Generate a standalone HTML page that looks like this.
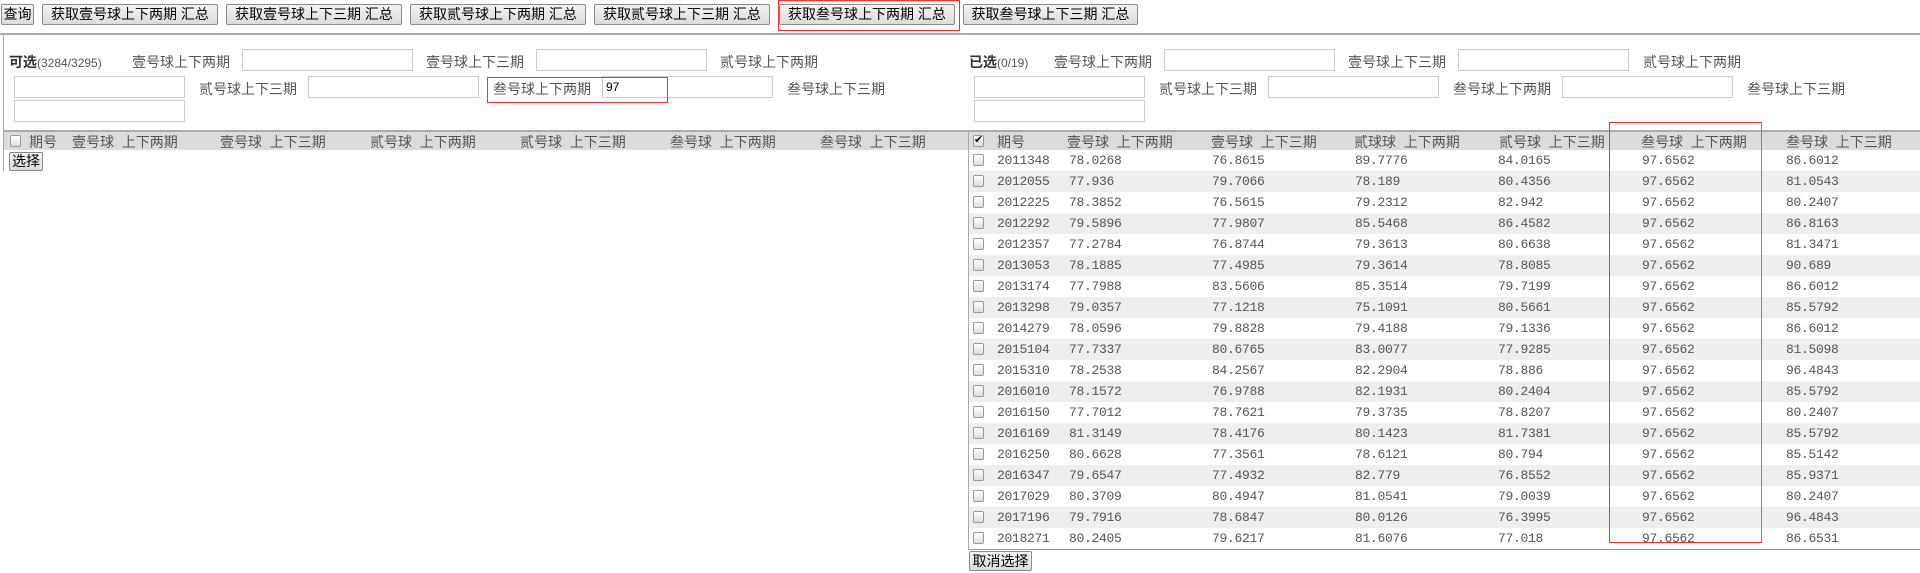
<!DOCTYPE html>
<html><head><meta charset="utf-8"><style>
*{margin:0;padding:0;box-sizing:border-box}
body{width:1920px;height:573px;background:#fff;position:relative;overflow:hidden;font-family:"Liberation Sans","Noto Sans CJK SC",sans-serif;font-size:14px;color:#555}
.a{position:absolute;white-space:nowrap}
.btn{position:absolute;top:4px;height:21px;background:linear-gradient(#f4f4f4,#dcdcdc);border:1px solid #8a8a8a;border-radius:2px;color:#000;font-size:14px;line-height:19px;text-align:center}
.inp{position:absolute;height:22px;width:171px;border:1px solid #ccc;background:#fff;color:#000;font-size:12px;line-height:20px;padding-left:3px}
.red{position:absolute;border:1px solid #e33}
.hdr{position:absolute;top:130px;height:20px;background:#dcdcdc;border-top:2px solid #aaa;font-size:14px;color:#555}
.cb{position:absolute;width:11px;height:12px;border:1px solid #999;border-radius:2px;background:linear-gradient(#fff,#ddd)}
.row{position:absolute;left:969px;width:951px;height:21px;font-family:"Liberation Mono","Noto Sans CJK SC",monospace;font-size:13px;color:#555;line-height:21px;letter-spacing:-0.3px}
.row span{position:absolute}
</style></head><body>
<div class="btn" style="left:1px;width:33px">查询</div>
<div class="btn" style="left:42px;width:176px">获取壹号球上下两期 汇总</div>
<div class="btn" style="left:226px;width:176px">获取壹号球上下三期 汇总</div>
<div class="btn" style="left:410px;width:176px">获取贰号球上下两期 汇总</div>
<div class="btn" style="left:594px;width:176px">获取贰号球上下三期 汇总</div>
<div class="btn" style="left:779px;width:176px">获取叁号球上下两期 汇总</div>
<div class="red" style="left:778px;top:0;width:182px;height:31px"></div>
<div class="btn" style="left:963px;width:175px">获取叁号球上下三期 汇总</div>
<div class="a" style="left:0;top:33px;width:1920px;height:2px;background:#aaa"></div>
<div class="a" style="left:3px;top:33px;width:1px;height:138px;background:#aaa"></div>

<!-- left -->
<div class="a" style="left:9px;top:52px;font-size:14px"><b style="color:#333">可选</b><span style="font-size:12px">(3284/3295)</span></div>
<div class="a" style="left:132px;top:52px">壹号球上下两期</div>
<div class="inp" style="left:242px;top:49px"></div>
<div class="a" style="left:426px;top:52px">壹号球上下三期</div>
<div class="inp" style="left:536px;top:49px"></div>
<div class="a" style="left:720px;top:52px">贰号球上下两期</div>
<div class="inp" style="left:14px;top:76px"></div>
<div class="a" style="left:199px;top:79px">贰号球上下三期</div>
<div class="inp" style="left:308px;top:76px"></div>
<div class="a" style="left:493px;top:79px">叁号球上下两期</div>
<div class="inp" style="left:602px;top:76px">97</div>
<div class="red" style="left:487px;top:77px;width:181px;height:26px"></div>
<div class="a" style="left:787px;top:79px">叁号球上下三期</div>
<div class="inp" style="left:14px;top:100px"></div>
<div class="hdr" style="left:4px;width:964px">
<div class="cb" style="left:6px;top:3px"></div>
<span class="a" style="left:25px;top:0">期号</span>
<span class="a" style="left:68px;top:0">壹号球&nbsp; 上下两期</span>
<span class="a" style="left:216px;top:0">壹号球&nbsp; 上下三期</span>
<span class="a" style="left:366px;top:0">贰号球&nbsp; 上下两期</span>
<span class="a" style="left:516px;top:0">贰号球&nbsp; 上下三期</span>
<span class="a" style="left:666px;top:0">叁号球&nbsp; 上下两期</span>
<span class="a" style="left:816px;top:0">叁号球&nbsp; 上下三期</span>
</div>
<div class="btn" style="left:9px;top:152px;width:34px;height:19px;font-size:14px;line-height:17px">选择</div>

<!-- right -->
<div class="a" style="left:969px;top:52px;font-size:14px"><b style="color:#333">已选</b><span style="font-size:12px">(0/19)</span></div>
<div class="a" style="left:1054px;top:52px">壹号球上下两期</div>
<div class="inp" style="left:1164px;top:49px"></div>
<div class="a" style="left:1348px;top:52px">壹号球上下三期</div>
<div class="inp" style="left:1458px;top:49px"></div>
<div class="a" style="left:1643px;top:52px">贰号球上下两期</div>
<div class="inp" style="left:974px;top:76px"></div>
<div class="a" style="left:1159px;top:79px">贰号球上下三期</div>
<div class="inp" style="left:1268px;top:76px"></div>
<div class="a" style="left:1453px;top:79px">叁号球上下两期</div>
<div class="inp" style="left:1562px;top:76px"></div>
<div class="a" style="left:1747px;top:79px">叁号球上下三期</div>
<div class="inp" style="left:974px;top:100px"></div>
<div class="a" style="left:968px;top:130px;width:1px;height:420px;background:#aaa"></div>
<div class="hdr" style="left:969px;width:951px">
<div class="cb" style="left:4px;top:3px;font-size:11px;line-height:9px;color:#000;text-align:center">✔</div>
<span class="a" style="left:28px;top:0">期号</span>
<span class="a" style="left:98px;top:0">壹号球&nbsp; 上下两期</span>
<span class="a" style="left:242px;top:0">壹号球&nbsp; 上下三期</span>
<span class="a" style="left:385px;top:0">贰球球&nbsp; 上下两期</span>
<span class="a" style="left:530px;top:0">贰号球&nbsp; 上下三期</span>
<span class="a" style="left:672px;top:0">叁号球&nbsp; 上下两期</span>
<span class="a" style="left:817px;top:0">叁号球&nbsp; 上下三期</span>
</div>
<div class="row" style="top:150px;background:#fff"><div class="cb" style="left:4px;top:4px"></div><span style="left:28px">2011348</span><span style="left:100px">78.0268</span><span style="left:243px">76.8615</span><span style="left:386px">89.7776</span><span style="left:529px">84.0165</span><span style="left:673px">97.6562</span><span style="left:817px">86.6012</span></div>
<div class="row" style="top:171px;background:#eee"><div class="cb" style="left:4px;top:4px"></div><span style="left:28px">2012055</span><span style="left:100px">77.936</span><span style="left:243px">79.7066</span><span style="left:386px">78.189</span><span style="left:529px">80.4356</span><span style="left:673px">97.6562</span><span style="left:817px">81.0543</span></div>
<div class="row" style="top:192px;background:#fff"><div class="cb" style="left:4px;top:4px"></div><span style="left:28px">2012225</span><span style="left:100px">78.3852</span><span style="left:243px">76.5615</span><span style="left:386px">79.2312</span><span style="left:529px">82.942</span><span style="left:673px">97.6562</span><span style="left:817px">80.2407</span></div>
<div class="row" style="top:213px;background:#eee"><div class="cb" style="left:4px;top:4px"></div><span style="left:28px">2012292</span><span style="left:100px">79.5896</span><span style="left:243px">77.9807</span><span style="left:386px">85.5468</span><span style="left:529px">86.4582</span><span style="left:673px">97.6562</span><span style="left:817px">86.8163</span></div>
<div class="row" style="top:234px;background:#fff"><div class="cb" style="left:4px;top:4px"></div><span style="left:28px">2012357</span><span style="left:100px">77.2784</span><span style="left:243px">76.8744</span><span style="left:386px">79.3613</span><span style="left:529px">80.6638</span><span style="left:673px">97.6562</span><span style="left:817px">81.3471</span></div>
<div class="row" style="top:255px;background:#eee"><div class="cb" style="left:4px;top:4px"></div><span style="left:28px">2013053</span><span style="left:100px">78.1885</span><span style="left:243px">77.4985</span><span style="left:386px">79.3614</span><span style="left:529px">78.8085</span><span style="left:673px">97.6562</span><span style="left:817px">90.689</span></div>
<div class="row" style="top:276px;background:#fff"><div class="cb" style="left:4px;top:4px"></div><span style="left:28px">2013174</span><span style="left:100px">77.7988</span><span style="left:243px">83.5606</span><span style="left:386px">85.3514</span><span style="left:529px">79.7199</span><span style="left:673px">97.6562</span><span style="left:817px">86.6012</span></div>
<div class="row" style="top:297px;background:#eee"><div class="cb" style="left:4px;top:4px"></div><span style="left:28px">2013298</span><span style="left:100px">79.0357</span><span style="left:243px">77.1218</span><span style="left:386px">75.1091</span><span style="left:529px">80.5661</span><span style="left:673px">97.6562</span><span style="left:817px">85.5792</span></div>
<div class="row" style="top:318px;background:#fff"><div class="cb" style="left:4px;top:4px"></div><span style="left:28px">2014279</span><span style="left:100px">78.0596</span><span style="left:243px">79.8828</span><span style="left:386px">79.4188</span><span style="left:529px">79.1336</span><span style="left:673px">97.6562</span><span style="left:817px">86.6012</span></div>
<div class="row" style="top:339px;background:#eee"><div class="cb" style="left:4px;top:4px"></div><span style="left:28px">2015104</span><span style="left:100px">77.7337</span><span style="left:243px">80.6765</span><span style="left:386px">83.0077</span><span style="left:529px">77.9285</span><span style="left:673px">97.6562</span><span style="left:817px">81.5098</span></div>
<div class="row" style="top:360px;background:#fff"><div class="cb" style="left:4px;top:4px"></div><span style="left:28px">2015310</span><span style="left:100px">78.2538</span><span style="left:243px">84.2567</span><span style="left:386px">82.2904</span><span style="left:529px">78.886</span><span style="left:673px">97.6562</span><span style="left:817px">96.4843</span></div>
<div class="row" style="top:381px;background:#eee"><div class="cb" style="left:4px;top:4px"></div><span style="left:28px">2016010</span><span style="left:100px">78.1572</span><span style="left:243px">76.9788</span><span style="left:386px">82.1931</span><span style="left:529px">80.2404</span><span style="left:673px">97.6562</span><span style="left:817px">85.5792</span></div>
<div class="row" style="top:402px;background:#fff"><div class="cb" style="left:4px;top:4px"></div><span style="left:28px">2016150</span><span style="left:100px">77.7012</span><span style="left:243px">78.7621</span><span style="left:386px">79.3735</span><span style="left:529px">78.8207</span><span style="left:673px">97.6562</span><span style="left:817px">80.2407</span></div>
<div class="row" style="top:423px;background:#eee"><div class="cb" style="left:4px;top:4px"></div><span style="left:28px">2016169</span><span style="left:100px">81.3149</span><span style="left:243px">78.4176</span><span style="left:386px">80.1423</span><span style="left:529px">81.7381</span><span style="left:673px">97.6562</span><span style="left:817px">85.5792</span></div>
<div class="row" style="top:444px;background:#fff"><div class="cb" style="left:4px;top:4px"></div><span style="left:28px">2016250</span><span style="left:100px">80.6628</span><span style="left:243px">77.3561</span><span style="left:386px">78.6121</span><span style="left:529px">80.794</span><span style="left:673px">97.6562</span><span style="left:817px">85.5142</span></div>
<div class="row" style="top:465px;background:#eee"><div class="cb" style="left:4px;top:4px"></div><span style="left:28px">2016347</span><span style="left:100px">79.6547</span><span style="left:243px">77.4932</span><span style="left:386px">82.779</span><span style="left:529px">76.8552</span><span style="left:673px">97.6562</span><span style="left:817px">85.9371</span></div>
<div class="row" style="top:486px;background:#fff"><div class="cb" style="left:4px;top:4px"></div><span style="left:28px">2017029</span><span style="left:100px">80.3709</span><span style="left:243px">80.4947</span><span style="left:386px">81.0541</span><span style="left:529px">79.0039</span><span style="left:673px">97.6562</span><span style="left:817px">80.2407</span></div>
<div class="row" style="top:507px;background:#eee"><div class="cb" style="left:4px;top:4px"></div><span style="left:28px">2017196</span><span style="left:100px">79.7916</span><span style="left:243px">78.6847</span><span style="left:386px">80.0126</span><span style="left:529px">76.3995</span><span style="left:673px">97.6562</span><span style="left:817px">96.4843</span></div>
<div class="row" style="top:528px;background:#fff"><div class="cb" style="left:4px;top:4px"></div><span style="left:28px">2018271</span><span style="left:100px">80.2405</span><span style="left:243px">79.6217</span><span style="left:386px">81.6076</span><span style="left:529px">77.018</span><span style="left:673px">97.6562</span><span style="left:817px">86.6531</span></div>
<div class="a" style="left:969px;top:549px;width:951px;height:1px;background:#999"></div>
<div class="a" style="left:1609px;top:122px;width:153px;height:421px;border:1px solid #e33;border-right-color:#888"></div>
<div class="btn" style="left:969px;top:551px;width:63px;height:20px;font-size:14px;line-height:18px">取消选择</div>
</body></html>
